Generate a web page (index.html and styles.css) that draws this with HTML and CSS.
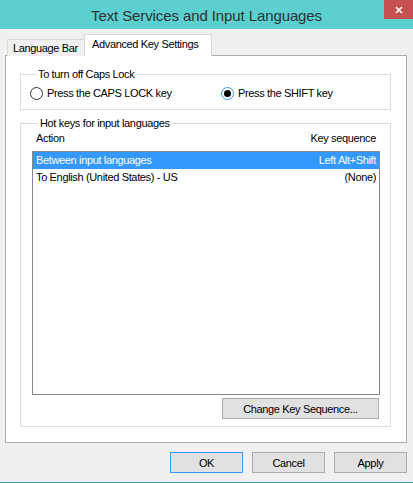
FILE: index.html
```html
<!DOCTYPE html>
<html lang="en">
  <head>
    <meta charset="UTF-8" />
    <meta name="viewport" content="width=device-width, initial-scale=1.0" />
    <title>Text Services and Input Languages</title>
    <link rel="stylesheet" href="styles.css">
  </head>
  <body>
    <div class="window">
      <div class="titlebar">
        <span class="title">Text Services and Input Languages</span>
        <button class="close" aria-label="Close">
          <svg width="8" height="8" viewBox="0 0 8 8">
            <path d="M1 1 L7 7 M7 1 L1 7" stroke="#fff" stroke-width="1.6" />
          </svg>
        </button>
      </div>

      <div class="content">
        <div class="tabs">
          <div class="tab">Language Bar</div>
          <div class="tab active">Advanced Key Settings</div>
        </div>

        <div class="panel">
          <fieldset class="group caps">
            <legend>To turn off Caps Lock</legend>
            <div class="radios">
              <label class="radio first"><span class="dot"></span>Press the CAPS LOCK key</label>
              <label class="radio"><span class="dot checked"></span>Press the SHIFT key</label>
            </div>
          </fieldset>

          <fieldset class="group hotkeys">
            <legend>Hot keys for input languages</legend>
            <div class="list-head">
              <span>Action</span>
              <span>Key sequence</span>
            </div>
            <div class="listbox">
              <div class="row selected">
                <span>Between input languages</span>
                <span>Left Alt+Shift</span>
              </div>
              <div class="row">
                <span>To English (United States) - US</span>
                <span>(None)</span>
              </div>
            </div>
            <div class="change-row">
              <button class="btn change">Change Key Sequence...</button>
            </div>
          </fieldset>
        </div>

        <div class="actions">
          <button class="btn default">OK</button>
          <button class="btn">Cancel</button>
          <button class="btn">Apply</button>
        </div>
      </div>
    </div>
  </body>
</html>
```

FILE: styles.css
```css
body {
  margin: 0;
  background-color: #f0f0f0;
  font-family: "Liberation Sans", Arial, sans-serif;
  font-size: 11px;
  letter-spacing: -0.35px;
  color: #000;
}
.window {
  width: 413px;
  height: 483px;
  box-sizing: border-box;
  border-bottom: 1px solid #2aa39a;
  background-color: #f0f0f0;
}
.titlebar {
  position: relative;
  height: 29px;
  background-color: #5ccfcf;
  display: flex;
  align-items: center;
  justify-content: center;
}
.title {
  font-size: 15px;
  letter-spacing: -0.1px;
  color: #2b3333;
  margin-top: 1px;
}
.close {
  position: absolute;
  top: 0;
  right: 0;
  width: 29px;
  height: 19px;
  border: none;
  padding: 0;
  background-color: #c75050;
  display: flex;
  align-items: center;
  justify-content: center;
}
.content {
  padding: 7px 6px 0 5px;
}
.tabs {
  display: flex;
  align-items: flex-end;
  padding-left: 2px;
  height: 20px;
  position: relative;
  z-index: 1;
  margin-bottom: -1px;
}
.tab {
  box-sizing: border-box;
  height: 17px;
  width: 77px;
  padding: 1px 0 0 5px;
  border: 1px solid #d9d9d9;
  border-right: none;
  border-bottom: none;
  background-color: #f0f0f0;
  line-height: 14px;
  white-space: nowrap;
}
.tab.active {
  height: 22px;
  width: 128px;
  padding: 2px 0 0 7px;
  border-right: 1px solid #d9d9d9;
  background-color: #fff;
}
.panel {
  height: 388px;
  box-sizing: border-box;
  border: 1px solid #adadad;
  background-color: #fff;
  padding: 11px 15px 0 14px;
}
.group {
  margin: 0;
  border: 1px solid #dcdcdc;
  padding: 0;
  min-width: 0;
}
.group legend {
  margin-left: 6px;
  padding: 0 2px;
  line-height: 14px;
}
.caps {
  padding: 4px 0 8px 9px;
}
.radios {
  display: flex;
  height: 16px;
  align-items: center;
}
.radio {
  display: flex;
  align-items: center;
  gap: 4px;
}
.radio.first {
  width: 191px;
}
.dot {
  box-sizing: border-box;
  width: 13px;
  height: 13px;
  border-radius: 50%;
  border: 1px solid #333;
  background-color: #fff;
  display: flex;
  align-items: center;
  justify-content: center;
}
.dot.checked {
  border-color: #3399ff;
}
.dot.checked::after {
  content: "";
  width: 7px;
  height: 7px;
  border-radius: 50%;
  background-color: #000;
}
.hotkeys {
  margin-top: 6px;
  padding: 1px 10px 7px 11px;
}
.list-head {
  display: flex;
  justify-content: space-between;
  padding: 0 4px;
  line-height: 14px;
  margin-bottom: 6px;
}
.listbox {
  box-sizing: border-box;
  height: 244px;
  border: 1px solid #828790;
  background-color: #fff;
}
.row {
  display: flex;
  justify-content: space-between;
  height: 17px;
  line-height: 17px;
  padding: 0 3px;
}
.row.selected {
  background-color: #3399ff;
  color: #fff;
}
.change-row {
  display: flex;
  justify-content: flex-end;
  padding-right: 1px;
  margin-top: 3px;
}
.btn {
  box-sizing: border-box;
  height: 21px;
  border: 1px solid #adadad;
  background-color: #e1e1e1;
  font-family: "Liberation Sans", Arial, sans-serif;
  font-size: 11px;
  letter-spacing: -0.35px;
  color: #000;
  padding: 0;
}
.change {
  width: 157px;
}
.actions {
  display: flex;
  justify-content: flex-end;
  gap: 9px;
  margin-top: 9px;
}
.actions .btn {
  width: 73px;
}
.btn.default {
  border-color: #3399ff;
}
```
